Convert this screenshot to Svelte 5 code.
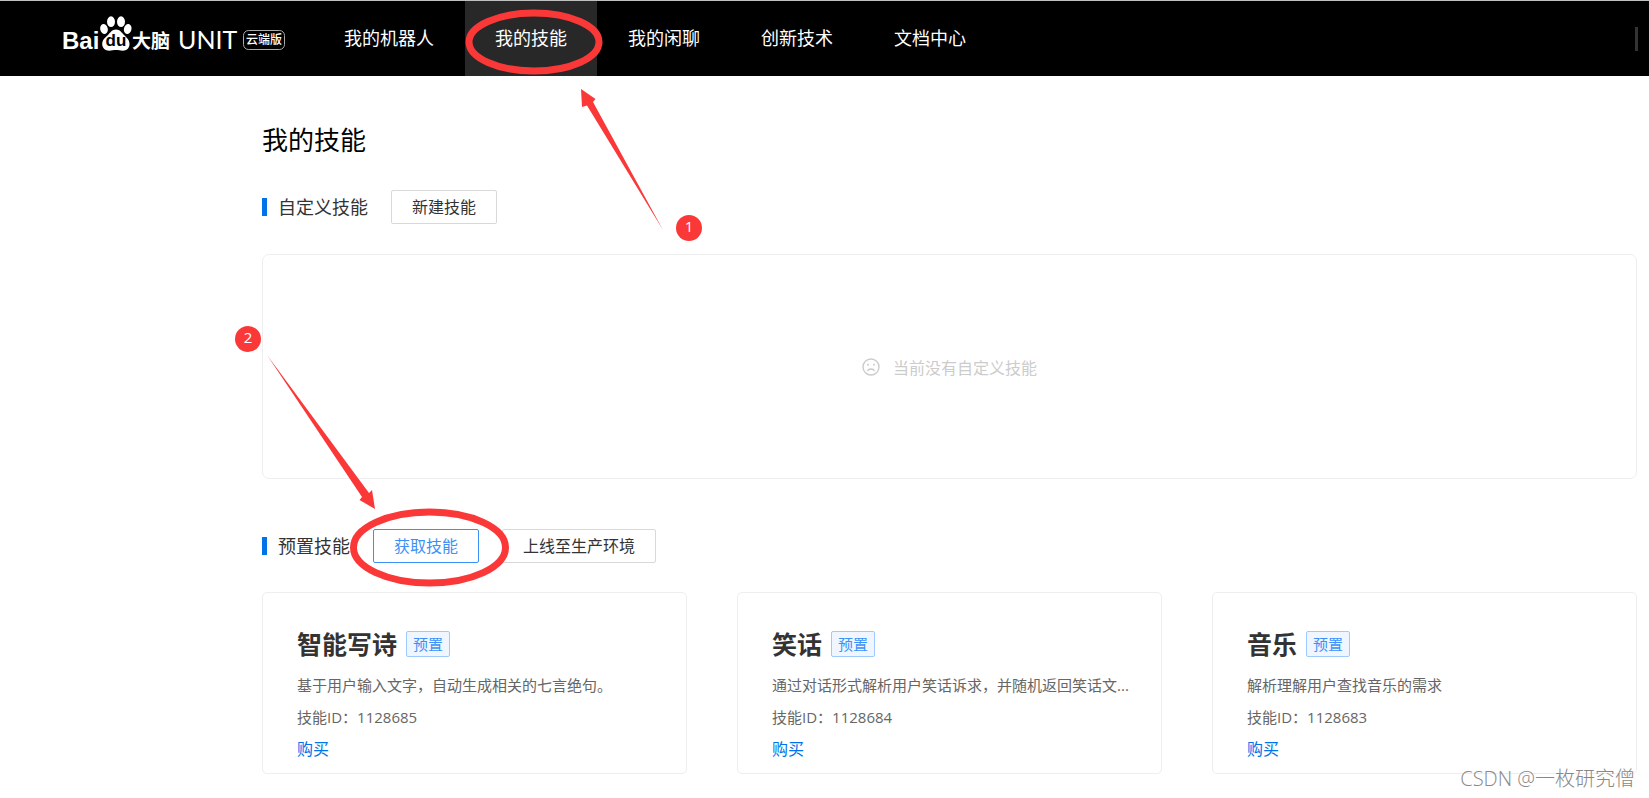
<script lang="ts">
	const navItems = ['我的机器人', '我的技能', '我的闲聊', '创新技术', '文档中心'];
	const activeItem = '我的技能';

	const presetSkills = [
		{ id: 1128685, name: '智能写诗', desc: '基于用户输入文字，自动生成相关的七言绝句。' },
		{ id: 1128684, name: '笑话', desc: '通过对话形式解析用户笑话诉求，并随机返回笑话文...' },
		{ id: 1128683, name: '音乐', desc: '解析理解用户查找音乐的需求' }
	];
</script>

<div class="page" lang="zh-CN">
	<header class="topbar">
		<a class="logo" href="#home" aria-label="Baidu 大脑 UNIT 云端版">
			<svg width="224" height="52" viewBox="0 0 224 52">
				<g fill="#fff">
					<text class="logo-bai" x="0" y="36">Bai</text>
					<!-- paw -->
					<ellipse cx="42" cy="16" rx="3.8" ry="5" transform="rotate(-12 42 16)" />
					<ellipse cx="49" cy="8.7" rx="4" ry="5.4" />
					<ellipse cx="59" cy="8.7" rx="4" ry="5.4" />
					<ellipse cx="65.7" cy="16" rx="3.8" ry="5" transform="rotate(12 65.7 16)" />
					<path
						d="M54 16.500c-4 0-5.600 3-8 5.500-3 2.600-5.800 5-5.800 9 0 4.300 3.300 6.700 7 6.700 2.500 0 4.500-.7 6.800-.7s4.300.7 6.800.7c3.700 0 6.700-2.400 6.700-6.700 0-4-2.700-6.400-5.500-9-2.500-2.500-4-5.500-8-5.500z"
					/>
					<text class="logo-du" x="54" y="33" text-anchor="middle" fill="#000">du</text>
					<text class="logo-brain" x="70" y="35">大脑</text>
					<text class="logo-unit" x="116" y="36">UNIT</text>
					<text class="logo-tag" x="202" y="31" text-anchor="middle">云端版</text>
				</g>
				<rect x="181.500" y="17.500" width="41" height="19" rx="5" fill="none" stroke="#aaa" />
			</svg>
		</a>
		<nav class="nav">
			{#each navItems as item (item)}
				<a class="nav-item" class:active={item === activeItem} href="#nav">{item}</a>
			{/each}
		</nav>
		<span class="divider"></span>
	</header>

	<main class="content">
		<h1>我的技能</h1>

		<div class="section-head">
			<h2>自定义技能</h2>
			<button class="btn" type="button">新建技能</button>
		</div>
		<section class="empty">
			<svg width="18" height="18" viewBox="0 0 18 18" fill="none" stroke="#ccc" stroke-width="1.4">
				<circle cx="9" cy="9" r="8" />
				<path d="M5.500 13c1-2.600 6-2.600 7 0" />
				<circle cx="6" cy="6.800" r="1" fill="#ccc" stroke="none" />
				<circle cx="12" cy="6.800" r="1" fill="#ccc" stroke="none" />
			</svg>
			<span>当前没有自定义技能</span>
		</section>

		<div class="section-head preset">
			<h2>预置技能</h2>
			<button class="btn primary" type="button">获取技能</button>
			<button class="btn" type="button">上线至生产环境</button>
		</div>
		<section class="cards">
			{#each presetSkills as skill (skill.id)}
				<article class="card">
					<div class="card-title">
						<h3>{skill.name}</h3>
						<span class="badge">预置</span>
					</div>
					<p>{skill.desc}</p>
					<p>技能ID：{skill.id}</p>
					<a class="buy" href="#buy">购买</a>
				</article>
			{/each}
		</section>
	</main>

	<!-- step annotations drawn over the page -->
	<svg class="marks" width="720" height="600" viewBox="0 0 720 600">
		<g fill="none" stroke="#fb3838" stroke-width="7">
			<ellipse cx="534" cy="42" rx="65" ry="29" />
			<ellipse cx="429.500" cy="547.500" rx="76" ry="35.500" />
		</g>
		<g fill="#fb3838">
			<path d="M581 89 595.500 99 593 102 663 230 587 105.500 582 107z" />
			<path d="M375 509 359.500 500 362 497 267 355 369 493 372 490z" />
			<circle cx="689" cy="228" r="13" />
			<circle cx="248" cy="339" r="13" />
		</g>
		<g class="mark-num" fill="#fff" text-anchor="middle">
			<text x="689" y="232">1</text>
			<text x="248" y="343">2</text>
		</g>
	</svg>
	<span class="watermark">CSDN @一枚研究僧</span>
</div>

<style>
	:global(body) {
		background: #fff;
	}
	.page {
		position: relative;
		min-height: 100vh;
		box-sizing: border-box;
		overflow: hidden;
		font-family: 'Open Sans', 'Noto Sans CJK SC', sans-serif;
		color: #333;
	}
	a {
		text-decoration: none;
	}
	h1, h2, h3, p {
		margin: 0;
		font-weight: 400;
	}

	/* top bar */
	.topbar {
		display: flex;
		align-items: center;
		height: 75px;
		padding: 0 11px 0 62px;
		border-top: 1px solid #c0c0c0;
		background: #000;
	}
	.logo {
		display: flex;
		margin-right: 28px;
	}
	.logo-bai {
		font: 700 24px 'Liberation Sans', sans-serif;
	}
	.logo-du {
		font: 700 17px 'Liberation Sans', sans-serif;
	}
	.logo-brain {
		font: 700 19px 'Noto Sans CJK SC', sans-serif;
	}
	.logo-unit {
		font: 400 25px Lato, sans-serif;
	}
	.logo-tag {
		font: 500 12px 'Noto Sans CJK SC', sans-serif;
	}
	.nav {
		display: flex;
		gap: 1px;
		height: 100%;
	}
	.nav-item {
		padding: 0 30px;
		font-size: 18px;
		line-height: 75px;
		color: #fff;
	}
	.nav-item.active {
		background: #282828;
	}
	.divider {
		width: 3px;
		height: 24px;
		margin-left: auto;
		background: #333;
	}

	/* content */
	.content {
		padding: 44px 12px 24px 262px;
	}
	h1 {
		font-size: 26px;
		line-height: 40px;
		color: #000;
	}
	.section-head {
		display: flex;
		align-items: center;
		gap: 23px;
		margin-top: 30px;
	}
	.section-head.preset {
		margin-top: 50px;
	}
	h2 {
		display: flex;
		align-items: center;
		gap: 11px;
		font-size: 18px;
		line-height: 34px;
	}
	h2::before {
		content: '';
		width: 5px;
		height: 18px;
		background: #0073eb;
	}
	.btn {
		height: 34px;
		padding: 0 20px 2px;
		border: 1px solid #d9d9d9;
		border-radius: 2px;
		background: #fff;
		font-family: inherit;
		font-size: 16px;
		color: #333;
	}
	.btn.primary {
		border-color: #3c91f7;
		color: #3c91f7;
	}
	.empty {
		display: flex;
		align-items: center;
		justify-content: center;
		gap: 13px;
		box-sizing: border-box;
		min-height: 225px;
		margin-top: 30px;
		border: 1px solid #eee;
		border-radius: 7px;
		font-size: 16px;
		color: #ccc;
	}

	/* preset skill cards */
	.cards {
		display: grid;
		grid-template-columns: repeat(3, 1fr);
		gap: 50px;
		margin-top: 29px;
	}
	.card {
		padding: 31px 30px 8px 34px;
		border: 1px solid #eee;
		border-radius: 5px;
		font-size: 15px;
		line-height: 32px;
	}
	.card-title {
		display: flex;
		align-items: center;
		gap: 9px;
		margin-bottom: 5px;
	}
	h3 {
		font-size: 25px;
		font-weight: 700;
		line-height: 40px;
	}
	.badge {
		padding: 0 6px;
		border: 1px solid #9dcbff;
		border-radius: 2px;
		background: #f0f6ff;
		line-height: 24px;
		color: #3c91f7;
	}
	.card p {
		color: #666;
		white-space: nowrap;
	}
	.buy {
		display: block;
		font-size: 16px;
		color: #0073eb;
	}

	/* overlays */
	.marks {
		position: absolute;
		top: 0;
		left: 0;
		pointer-events: none;
	}
	.mark-num {
		font-size: 15px;
	}
	.watermark {
		position: absolute;
		right: 14px;
		bottom: 5px;
		font-size: 20px;
		font-weight: 300;
		line-height: 28px;
		color: #888;
	}
</style>
